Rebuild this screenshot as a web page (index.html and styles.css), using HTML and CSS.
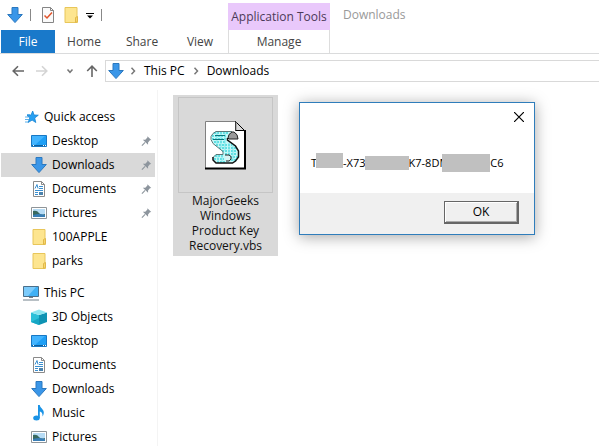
FILE: index.html
```
<!DOCTYPE html>
<html lang="en">
<head>
    <meta charset="UTF-8">
    <title>Downloads</title>
    <link rel="stylesheet" href="styles.css">
</head>
<body>
    <!-- shared icons -->
    <svg class="icon-defs" aria-hidden="true">
        <symbol id="i-down" viewBox="0 0 16 16">
            <path d="M5 .5h6v7h4.3L8 15.6.7 7.500H5z" fill="#3a96e8" stroke="#2b78bf" stroke-width="1"/>
        </symbol>
        <symbol id="i-folder" viewBox="0 0 16 16">
            <path d="M2 .5h12v10l.5.5v4.500H2z" fill="#fde58f" stroke="#e8c65a"/>
            <path d="M12.500 15.500v-5l2-1v5z" fill="#f8d66c" stroke="#e0b84a"/>
        </symbol>
        <symbol id="i-desktop" viewBox="0 0 16 16">
            <path d="M.5 2.500h15v11H.5z" fill="#1f9ff5" stroke="#1878c4"/>
            <path d="M1 3h13L4 12H1z" fill="#42b4ff"/>
            <path d="M1 12.500h14" stroke="#0d5f9f"/>
            <path d="M2 12.500h1M12 12.500h1M14 12.500h1" stroke="#fff"/>
        </symbol>
        <symbol id="i-doc" viewBox="0 0 16 16">
            <path d="M2.500.5h8l3 3v12h-11z" fill="#fff" stroke="#8a8a8a"/>
            <path d="M10.500.5v3h3" fill="none" stroke="#8a8a8a"/>
            <path d="M4 7.500 6 3.500l1 4M8 5.500h4M8 7.500h4M4 9.500h8M4 11.500h3M4 13.500h3" fill="none" stroke="#3a8fd0"/>
            <path d="M8 11h4v3H8z" fill="#4c83ad"/>
        </symbol>
        <symbol id="i-pic" viewBox="0 0 16 16">
            <path d="M.5 2.500h15v11H.5z" fill="#fff" stroke="#8f9599"/>
            <path d="M2 4h12v8H2z" fill="#b7dcf5"/>
            <path d="M2 6q4-1 6 2t6 1v3H2z" fill="#39695f"/>
            <path d="M2 10q6-2 12 0v2H2z" fill="#397eb5"/>
        </symbol>
        <symbol id="i-pin" viewBox="0 0 12 12">
            <path d="m7 .8 4.200 4.200-1.500.3-2 2.200v2.700L2 4.500h2.700L7 2.300z" fill="#8d959d"/>
            <path d="M4.500 7.500 1 11" stroke="#8d959d" stroke-width="1.200"/>
        </symbol>
        <symbol id="i-chev" viewBox="0 0 8 8">
            <path d="m2.500.8 3 3.200-3 3.200" fill="none" stroke="#777" stroke-width="1.500"/>
        </symbol>
    </svg>

    <div class="explorer">
        <header class="titlebar">
            <div class="quick-bar">
                <svg class="icon"><use href="#i-down"/></svg>
                <span class="divider"></span>
                <button class="icon-btn" aria-label="Properties">
                    <svg class="icon" viewBox="0 0 16 16">
                        <path d="M2.500.5h8l3 3v12h-11z" fill="#fafafa" stroke="#858585"/>
                        <path d="M10.500.5v3h3" fill="none" stroke="#858585"/>
                        <path d="m4.500 8.500 2.500 2.500 5-5.500" fill="none" stroke="#e0532a" stroke-width="1.500"/>
                    </svg>
                </button>
                <button class="icon-btn" aria-label="New folder">
                    <svg class="icon"><use href="#i-folder"/></svg>
                </button>
                <button class="icon-btn more" aria-label="Customize">
                    <svg width="8" height="6" viewBox="0 0 8 6"><path d="M0 0h8v1H0zM1 2.500h6l-3 3z"/></svg>
                </button>
                <span class="divider"></span>
            </div>
            <span class="tool-group">Application Tools</span>
            <span class="window-title">Downloads</span>
        </header>

        <nav class="tabs">
            <button class="tab file-tab">File</button>
            <button class="tab">Home</button>
            <button class="tab">Share</button>
            <button class="tab">View</button>
            <button class="tab manage-tab">Manage</button>
        </nav>

        <div class="nav-row">
            <div class="arrows">
                <button class="icon-btn" aria-label="Back">
                    <svg width="12" height="12" viewBox="0 0 12 12"><path d="M12 6H1.500M6 1.200 1.200 6 6 10.800" fill="none" stroke="#666" stroke-width="1.600"/></svg>
                </button>
                <button class="icon-btn" aria-label="Forward">
                    <svg width="12" height="12" viewBox="0 0 12 12"><path d="M0 6h10.500M6 1.200 10.800 6 6 10.800" fill="none" stroke="#d4d4d4" stroke-width="1.600"/></svg>
                </button>
                <button class="icon-btn recent" aria-label="Recent">
                    <svg width="8" height="12" viewBox="0 0 8 12"><path d="m1.500 4.500 2.500 2.800 2.500-2.800" fill="none" stroke="#777" stroke-width="1.500"/></svg>
                </button>
                <button class="icon-btn" aria-label="Up">
                    <svg width="12" height="12" viewBox="0 0 12 12"><path d="M6 12V1.500M1.200 6 6 1.200 10.800 6" fill="none" stroke="#666" stroke-width="1.600"/></svg>
                </button>
            </div>
            <div class="address">
                <svg class="icon"><use href="#i-down"/></svg>
                <svg class="chev"><use href="#i-chev"/></svg>
                <a href="#">This PC</a>
                <svg class="chev"><use href="#i-chev"/></svg>
                <a href="#">Downloads</a>
            </div>
        </div>

        <div class="main">
            <aside class="sidebar">
                <ul class="tree">
                    <li class="root">
                        <svg class="icon" viewBox="0 0 16 16">
                            <path d="m9.700 2 1.300 4 4.300.2-3.600 2.800 1.100 4.500-3.700-2.400-4 2.400 1.700-4.500L4 6.500l4-.4z" fill="#27a0f2" stroke="#1583d3" stroke-width=".8"/>
                            <path d="M4 5.500h3M2 8h3M2 10.500h4M2 13h3" stroke="#5cb0ea"/>
                        </svg>
                        <span>Quick access</span>
                    </li>
                    <li><svg class="icon"><use href="#i-desktop"/></svg><span>Desktop</span><svg class="pin"><use href="#i-pin"/></svg></li>
                    <li class="selected"><svg class="icon"><use href="#i-down"/></svg><span>Downloads</span><svg class="pin"><use href="#i-pin"/></svg></li>
                    <li><svg class="icon"><use href="#i-doc"/></svg><span>Documents</span><svg class="pin"><use href="#i-pin"/></svg></li>
                    <li><svg class="icon"><use href="#i-pic"/></svg><span>Pictures</span><svg class="pin"><use href="#i-pin"/></svg></li>
                    <li><svg class="icon"><use href="#i-folder"/></svg><span>100APPLE</span></li>
                    <li><svg class="icon"><use href="#i-folder"/></svg><span>parks</span></li>
                </ul>
                <ul class="tree">
                    <li class="root">
                        <svg class="icon" viewBox="0 0 16 16">
                            <path d="M.5 1.500h15v10H.5z" fill="#41b1f5" stroke="#4b6f8a"/>
                            <path d="M1 2h12L5 11H1z" fill="#7ccbfb"/>
                            <path d="M6 12.500h4M0 15h16" stroke="#72818c"/>
                        </svg>
                        <span>This PC</span>
                    </li>
                    <li>
                        <svg class="icon" viewBox="0 0 16 16">
                            <path d="M0 3.500 8 6v10L0 13z" fill="#2cc0d8"/>
                            <path d="M16 3.500 8 6v10l8-3z" fill="#0e93b3"/>
                            <path d="M0 3.500 8 .5l8 3L8 6z" fill="#8de6f0"/>
                            <path d="M0 13 8 9v7z" fill="#16a6c4"/>
                        </svg>
                        <span>3D Objects</span>
                    </li>
                    <li><svg class="icon"><use href="#i-desktop"/></svg><span>Desktop</span></li>
                    <li><svg class="icon"><use href="#i-doc"/></svg><span>Documents</span></li>
                    <li><svg class="icon"><use href="#i-down"/></svg><span>Downloads</span></li>
                    <li>
                        <svg class="icon" viewBox="0 0 16 16">
                            <ellipse cx="5.500" cy="13" rx="3.300" ry="2.500" fill="#1a93e6"/>
                            <path d="M7 0h1.800c.2 3 4 4 4 7.500 0 1.500-.6 3-1.300 4 .3-3-.8-4.500-2.700-5V13H7z" fill="#1a93e6"/>
                        </svg>
                        <span>Music</span>
                    </li>
                    <li><svg class="icon"><use href="#i-pic"/></svg><span>Pictures</span></li>
                </ul>
            </aside>

            <section class="files">
                <div class="file">
                    <div class="thumb">
                        <svg width="41" height="49" viewBox="0 0 41 49">
                            <path d="M.5.500h30l9 9v38H.5z" fill="#fff" stroke="#808080"/>
                            <path d="M0 47.500h40V9" fill="none" stroke="#000" stroke-width="2"/>
                            <path d="M30.500.5v9h9z" fill="#d8d8d8" stroke="#000"/>
                            <path d="M31 1v8" stroke="#808080"/>
                            <!-- script scroll -->
                            <path d="M11 10h16l-4 5v4l8 6 3 5v6l-3 5-4 1H11l-3-3v-3l3-3h7v-2L8 22l-2-6 2-4z" fill="#c4f8f8"/>
                            <path d="M9 12h14M7 15h14M7 18h14M9 21h12M11 24h16M14 27h17M17 30h15M20 33h12M10 35h9M9 38h10M12 41h8M25 36h8M26 39h6" stroke="#3cd6da" stroke-width="1.500" stroke-dasharray="2 1"/>
                            <path d="M12 11v12M16 11v16M20 11v19M24 22v11M28 24v16M13 34v8M17 34v8" stroke="#7ee5e8"/>
                            <path d="M10 14.500h10M8 18.500h11" stroke="#08757c"/>
                            <path d="M27 10.500H11l-3 2-2 3v3l2 4 5 4 5 4v3h-7l-3 3" fill="none" stroke="#5b7878"/>
                            <path d="M22.500 17v2l8 6 3 5v6l-3 4-3 2H11l-3-3v-3" fill="none" stroke="#111" stroke-width="1.500"/>
                            <path d="M27 11h2q4 2 4 7h-9l-1-1q0-4 4-6z" fill="#999" stroke="#222"/>
                            <path d="M20 34h4q3 1 2 4t-5 2" fill="#d8f4f4" stroke="#222"/>
                        </svg>
                    </div>
                    <p class="file-name">MajorGeeks Windows Product Key Recovery.vbs</p>
                </div>
            </section>
        </div>
    </div>

    <div class="dialog" role="dialog" aria-label="Product key">
        <button class="close" aria-label="Close">
            <svg width="10" height="10" viewBox="0 0 10 10"><path d="m0 0 10 10M10 0 0 10" stroke="#000" stroke-width="1.200"/></svg>
        </button>
        <p class="key">
            <span>T</span><span class="mask mask-sm"></span><span>-X73</span><span class="mask mask-md"></span><span>K7-8DM</span><span class="mask mask-lg"></span><span>C6</span>
        </p>
        <div class="dialog-footer">
            <button class="ok-btn">OK</button>
        </div>
    </div>
</body>
</html>
```

FILE: styles.css
```
* {
    box-sizing: border-box;
}

body {
    margin: 0;
    background: #fff;
    color: #111;
    font-family: "Open Sans", "Noto Sans", sans-serif;
    font-size: 12px;
    line-height: 16px;
}

button {
    padding: 0;
    border: none;
    background: none;
    color: inherit;
    font: inherit;
}

a {
    color: inherit;
    text-decoration: none;
}

svg {
    display: block;
    flex-shrink: 0;
}

.icon-defs {
    display: none;
}

.icon {
    width: 16px;
    height: 16px;
}

.chev {
    width: 8px;
    height: 8px;
}

.explorer {
    display: flex;
    flex-direction: column;
    height: 100vh;
    overflow: hidden;
}

/* title bar */
.titlebar {
    display: flex;
    height: 30px;
}

.quick-bar {
    display: flex;
    align-items: center;
    gap: 7px;
    width: 228px;
    padding-left: 7px;
}

.divider {
    width: 1px;
    height: 12px;
    margin-right: 2px;
    background: #888;
}

.more {
    padding-top: 2px;
}

.tool-group {
    width: 102px;
    margin-top: 3px;
    padding-top: 6px;
    background: #e9c8fb;
    color: #4c3a58;
    text-align: center;
    white-space: nowrap;
}

.window-title {
    padding: 7px 13px;
    color: #999;
}

/* ribbon tabs */
.tabs {
    display: flex;
    height: 24px;
    border-bottom: 1px solid #dadbdc;
}

.tab {
    width: 58px;
    color: #444;
    text-align: center;
}

.file-tab {
    width: 54px;
    margin-left: 1px;
    background: #1979ca;
    color: #fff;
}

.manage-tab {
    width: 102px;
    margin-left: -1px;
    border: solid #ddd;
    border-width: 0 1px;
}

/* address row */
.nav-row {
    display: flex;
    align-items: center;
    padding: 6px 0 8px;
}

.arrows {
    display: flex;
    align-items: center;
    justify-content: space-between;
    width: 105px;
    padding: 0 7px 0 12px;
}

.recent {
    padding-left: 5px;
}

.address {
    display: flex;
    flex: 1;
    align-items: center;
    gap: 7px;
    height: 22px;
    padding-left: 2px;
    border: 1px solid #d9d9d9;
    border-right: none;
    color: #000;
}

.address .icon {
    margin-right: -2px;
}

/* main area */
.main {
    display: flex;
    flex: 1;
    min-height: 0;
}

.sidebar {
    width: 158px;
    padding-top: 15px;
    border-right: 1px solid #f4f4f4;
    overflow: hidden;
}

.tree {
    margin: 0 0 8px;
    padding: 0;
    list-style: none;
}

.tree li {
    display: flex;
    align-items: center;
    gap: 5px;
    height: 24px;
    margin: 0 2px 0 1px;
    padding: 0 3px 0 30px;
    color: #000;
}

.tree .root {
    padding-left: 22px;
}

.tree .selected {
    background: #d9d9d9;
}

.pin {
    width: 11px;
    height: 12px;
    margin-left: auto;
}

.files {
    flex: 1;
    padding: 5px 15px;
}

.file {
    width: 105px;
    padding: 2px 5px 3px;
    background: #d9d9d9;
    text-align: center;
}

.thumb {
    display: flex;
    align-items: center;
    justify-content: center;
    height: 96px;
    border: 1px solid #c5c5c5;
}

.file-name {
    margin: 0;
    line-height: 15px;
}

/* message box */
.dialog {
    position: absolute;
    top: 102px;
    left: 299px;
    width: 236px;
    border: 1px solid #2f7dbb;
    background: #fff;
    box-shadow: 0 2px 14px rgba(0, 0, 0, 0.35);
    color: #000;
}

.close {
    display: block;
    margin: 9px 10px 0 auto;
}

.key {
    display: flex;
    align-items: center;
    height: 18px;
    margin: 32px 11px 21px;
    font-size: 11px;
}

.mask {
    position: relative;
    flex-shrink: 0;
    background: #c0c0c0;
}

.mask-sm {
    width: 27px;
    height: 15px;
    margin-left: -1px;
    margin-bottom: 6px;
}

.mask-md {
    width: 44px;
    height: 14px;
    margin-left: -1px;
}

.mask-lg {
    width: 48px;
    height: 18px;
    margin-left: -7px;
}

.dialog-footer {
    padding: 8px 15px 10px;
    background: #f0f0f0;
    text-align: right;
}

.ok-btn {
    width: 75px;
    height: 23px;
    border: solid #666;
    border-width: 1px 2px 2px 1px;
    background: #f0f0f0;
    box-shadow: inset 1px 1px #fff, inset -1px -1px #aaa;
}
```
